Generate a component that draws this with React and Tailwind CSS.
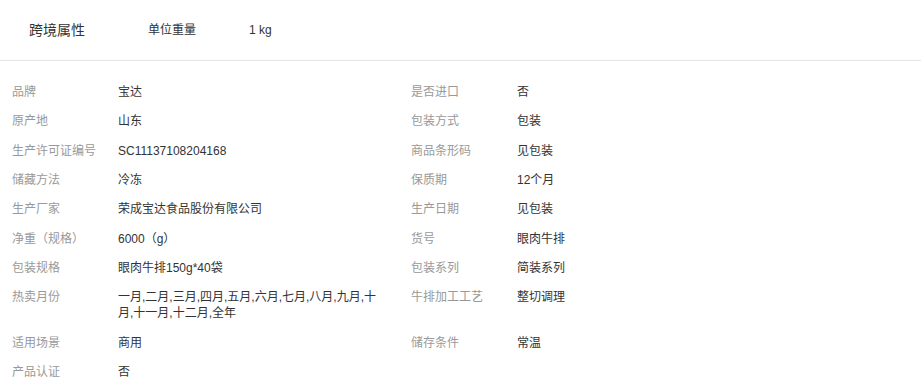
import React from 'react';

const attrs = [
    ['品牌', '宝达', '是否进口', '否'],
    ['原产地', '山东', '包装方式', '包装'],
    ['生产许可证编号', 'SC11137108204168', '商品条形码', '见包装'],
    ['储藏方法', '冷冻', '保质期', '12个月'],
    ['生产厂家', '荣成宝达食品股份有限公司', '生产日期', '见包装'],
    ['净重（规格）', '6000（g）', '货号', '眼肉牛排'],
    ['包装规格', '眼肉牛排150g*40袋', '包装系列', '简装系列'],
    [
        '热卖月份',
        '一月,二月,三月,四月,五月,六月,七月,八月,九月,十月,十一月,十二月,全年',
        '牛排加工工艺',
        '整切调理',
    ],
    ['适用场景', '商用', '储存条件', '常温'],
    ['产品认证', '否'],
];

function Cell({ label, value }) {
    if (!label) return <div />;
    return (
        <div className="flex py-[6.67px] leading-[16px] text-xs">
            <div className="w-[106px] shrink-0 text-[#999]">{label}</div>
            <div className="w-[263px] text-[#333] break-all">{value}</div>
        </div>
    );
}

export default function App() {
    return (
        <div
            className="w-[921px] h-[391px] bg-white overflow-hidden"
            style={{ fontFamily: '"Liberation Sans", "Noto Sans CJK SC", sans-serif' }}
        >
            {/* cross-border attributes */}
            <div className="h-[61px] flex items-center border-b border-[#e5e5e5] text-[#333]">
                <div className="w-[148px] pl-[29px] text-sm">跨境属性</div>
                <div className="w-[101px] text-xs">单位重量</div>
                <div className="text-xs">1 kg</div>
            </div>

            {/* base attributes */}
            <div className="pt-[16.5px] pl-3 grid grid-cols-[399px_399px]">
                {attrs.map((row, i) => (
                    <React.Fragment key={i}>
                        <Cell label={row[0]} value={row[1]} />
                        <Cell label={row[2]} value={row[3]} />
                    </React.Fragment>
                ))}
            </div>
        </div>
    );
}
